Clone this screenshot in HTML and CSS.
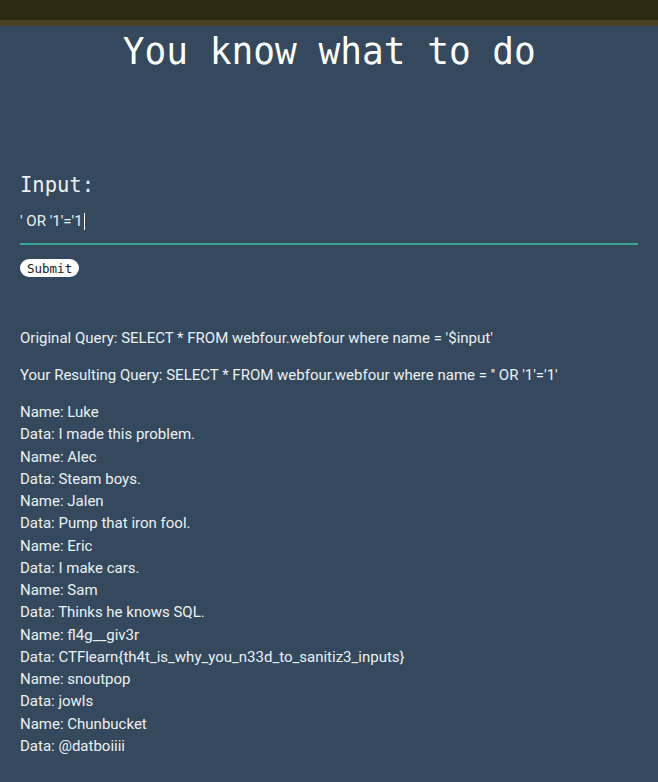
FILE: index.html
```html
<!DOCTYPE html>
<html>
<head>
<meta charset="utf-8">
<link rel="stylesheet" href="styles.css">
</head>
<body>
<div class="topbar"></div>
<div class="band"></div>
<header class="head">
  <h1 class="title">You know what to do</h1>
</header>
<main class="content">
  <form class="form">
    <label class="label">Input:</label>
    <div class="field"><span class="value">' OR '1'='1</span><span class="caret"></span></div>
    <button class="submit" type="button">Submit</button>
  </form>
  <p class="query">Original Query: SELECT * FROM webfour.webfour where name = '$input'</p>
  <p class="query">Your Resulting Query: SELECT * FROM webfour.webfour where name = '' OR '1'='1'</p>
  <div class="results">
    <div>Name: Luke</div>
    <div>Data: I made this problem.</div>
    <div>Name: Alec</div>
    <div>Data: Steam boys.</div>
    <div>Name: Jalen</div>
    <div>Data: Pump that iron fool.</div>
    <div>Name: Eric</div>
    <div>Data: I make cars.</div>
    <div>Name: Sam</div>
    <div>Data: Thinks he knows SQL.</div>
    <div>Name: fl4g__giv3r</div>
    <div>Data: CTFlearn{th4t_is_why_you_n33d_to_sanitiz3_inputs}</div>
    <div>Name: snoutpop</div>
    <div>Data: jowls</div>
    <div>Name: Chunbucket</div>
    <div>Data: @datboiiii</div>
  </div>
</main>
</body>
</html>
```
FILE: styles.css
```css
html, body {
  margin: 0;
  padding: 0;
}
body {
  background: #34495e;
  color: #ecf0f1;
  font-family: Roboto, "Liberation Sans", sans-serif;
  font-size: 15px;
  overflow: hidden;
}
.topbar {
  height: 20px;
  background: #2d2810;
}
.band {
  height: 6px;
  background: #4a4126;
}
.head {
  height: 50px;
  text-align: center;
}
.title {
  display: inline-block;
  margin: 0;
  font-family: "DejaVu Sans Mono", monospace;
  font-weight: normal;
  font-size: 38px;
  line-height: 50px;
  color: #ffffff;
  transform: scaleX(0.95);
}
.content {
  padding: 0 20px;
}
.form {
  display: flex;
  flex-direction: column;
  align-items: flex-start;
  padding-top: 95px;
}
.label {
  font-family: "DejaVu Sans Mono", monospace;
  font-size: 20.5px;
  color: #f0f0f0;
  line-height: 28px;
}
.field {
  align-self: stretch;
  display: flex;
  align-items: center;
  height: 44px;
  border-bottom: 2px solid #3fa59a;
}
.value {
  font-size: 15px;
  line-height: 18px;
  color: #ecf0f1;
}
.caret {
  width: 1px;
  height: 17px;
  background: #ffffff;
  margin-left: 1px;
}
.submit {
  margin-top: 14px;
  background: #ffffff;
  border: none;
  border-radius: 9px;
  padding: 0 7px;
  height: 18px;
  font-family: "DejaVu Sans Mono", monospace;
  font-size: 12.5px;
  color: #222;
}
.query {
  margin: 0 0 15px;
  line-height: 22px;
}
.query:first-of-type {
  margin-top: 50px;
}
.results {
  margin-top: 1px;
  line-height: 22.25px;
}
```
